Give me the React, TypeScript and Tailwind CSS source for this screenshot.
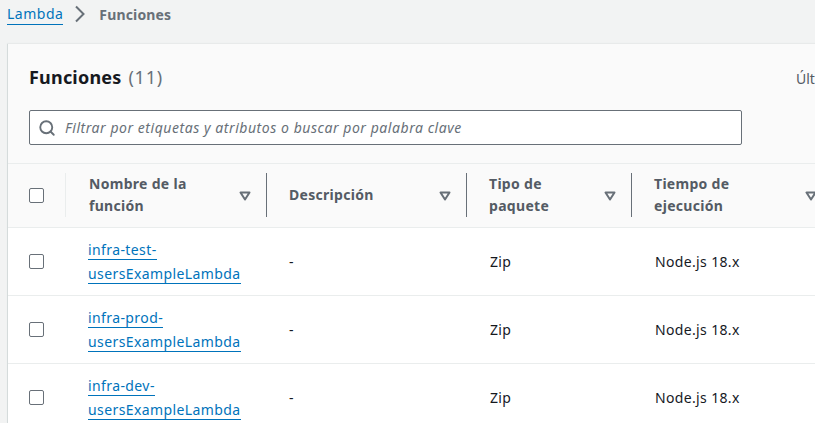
import { Search } from 'lucide-react';

const rows = [
    ['infra-test-', 'usersExampleLambda'],
    ['infra-prod-', 'usersExampleLambda'],
    ['infra-dev-', 'usersExampleLambda'],
];

const columns = 'grid grid-cols-[58px_201px_200px_165px_184px]';

function Checkbox() {
    return <div className="w-[15px] h-[15px] bg-white border border-[#687078] rounded-[2px]" />;
}

function SortIcon() {
    return (
        <svg width="12" height="10" viewBox="0 0 12 10" className="shrink-0">
            <path d="M1.5 1.5h9L6 8.5z" fill="none" stroke="#687078" strokeWidth="2" strokeLinejoin="round" />
        </svg>
    );
}

function HeaderCell({ lines, divider = true, sortRight, inset = 'pl-[22px]' }: { lines: string[]; divider?: boolean; sortRight: string; inset?: string }) {
    return (
        <div className={`flex items-center h-[44px] ${inset}`}>
            <div className="flex-1 font-bold text-[14px] leading-[22px] tracking-[0.3px] text-[#545b64] -translate-y-px">
                {lines.map((line) => (
                    <div key={line} className="whitespace-nowrap">{line}</div>
                ))}
            </div>
            <div className={sortRight}>
                <SortIcon />
            </div>
            {divider && <div className="w-px h-[44px] bg-[#687078] -translate-y-px" />}
        </div>
    );
}

export default function App() {
    return (
        <div className="w-[815px] h-[423px] overflow-hidden bg-[#f2f3f3] font-['Noto_Sans',sans-serif] text-[14px] text-[#16191f]">
            {/* Breadcrumb */}
            <div className="flex items-center h-[28px] pl-[7px]">
                <a className="text-[14px] leading-[20px] text-[#0073bb] border-b border-[#0073bb] tracking-[0.5px]">Lambda</a>
                <svg width="16" height="18" viewBox="0 0 16 18" className="ml-[10px] mr-[10px]">
                    <path d="M3 1.5L10.5 9 3 16.5" fill="none" stroke="#687078" strokeWidth="2" />
                </svg>
                <span className="font-bold text-[14px] tracking-[0.15px] text-[#687078]">Funciones</span>
            </div>

            {/* Card */}
            <div className="mt-[16px] ml-[7px] bg-[#fafafa] border-l border-[#d5dbdb] h-[379px] shadow-[0_-1px_1px_#e8eaea]">
                <div className="relative h-[119px] pl-[21px] pt-[19px]">
                    <h1 className="text-[18px] leading-[28px] font-bold tracking-[0.2px] text-[#16191f]">
                        Funciones <span className="ml-[2px] font-normal tracking-[0.8px] text-[#687078]">(11)</span>
                    </h1>
                    <span className="absolute left-[788px] top-[24px] text-[14px] text-[#545b64]">Últ</span>
                    <div className="flex items-center gap-[9px] mt-[19px] w-[713px] h-[35px] pl-[8px] bg-white border border-[#687078] rounded-[2px]">
                        <Search size={18} strokeWidth={2.5} color="#687078" />
                        <span className="italic text-[14px] tracking-[0.55px] text-[#687078]">Filtrar por etiquetas y atributos o buscar por palabra clave</span>
                    </div>
                </div>

                {/* Table */}
                <div className={`${columns} h-[65px] items-center border-y border-[#eaeded]`}>
                    <div className="flex items-center h-[44px] pl-[21px] border-r border-[#eaeded] -translate-y-px">
                        <div className="translate-y-px">
                            <Checkbox />
                        </div>
                    </div>
                    <HeaderCell lines={['Nombre de la', 'función']} sortRight="mr-[15px]" inset="pl-[23px]" />
                    <HeaderCell lines={['Descripción']} sortRight="mr-[15px]" />
                    <HeaderCell lines={['Tipo de', 'paquete']} sortRight="mr-[15px]" />
                    <HeaderCell lines={['Tiempo de', 'ejecución']} divider={false} sortRight="mr-[-1px]" />
                </div>
                {rows.map((name) => (
                    <div key={name[0]} className={`${columns} h-[68px] items-center bg-white border-b border-[#eaeded] tracking-[0.35px] text-[#16191f]`}>
                        <div className="pl-[21px]">
                            <Checkbox />
                        </div>
                        <div className="pl-[22px] text-[14px] leading-[24px] tracking-[0.4px] text-[#0073bb]">
                            <div><span className="border-b border-[#0073bb]">{name[0]}</span></div>
                            <div><span className="border-b border-[#0073bb]">{name[1]}</span></div>
                        </div>
                        <div className="pl-[22px]">-</div>
                        <div className="pl-[23px]">Zip</div>
                        <div className="pl-[23px]">Node.js 18.x</div>
                    </div>
                ))}
            </div>
        </div>
    );
}
